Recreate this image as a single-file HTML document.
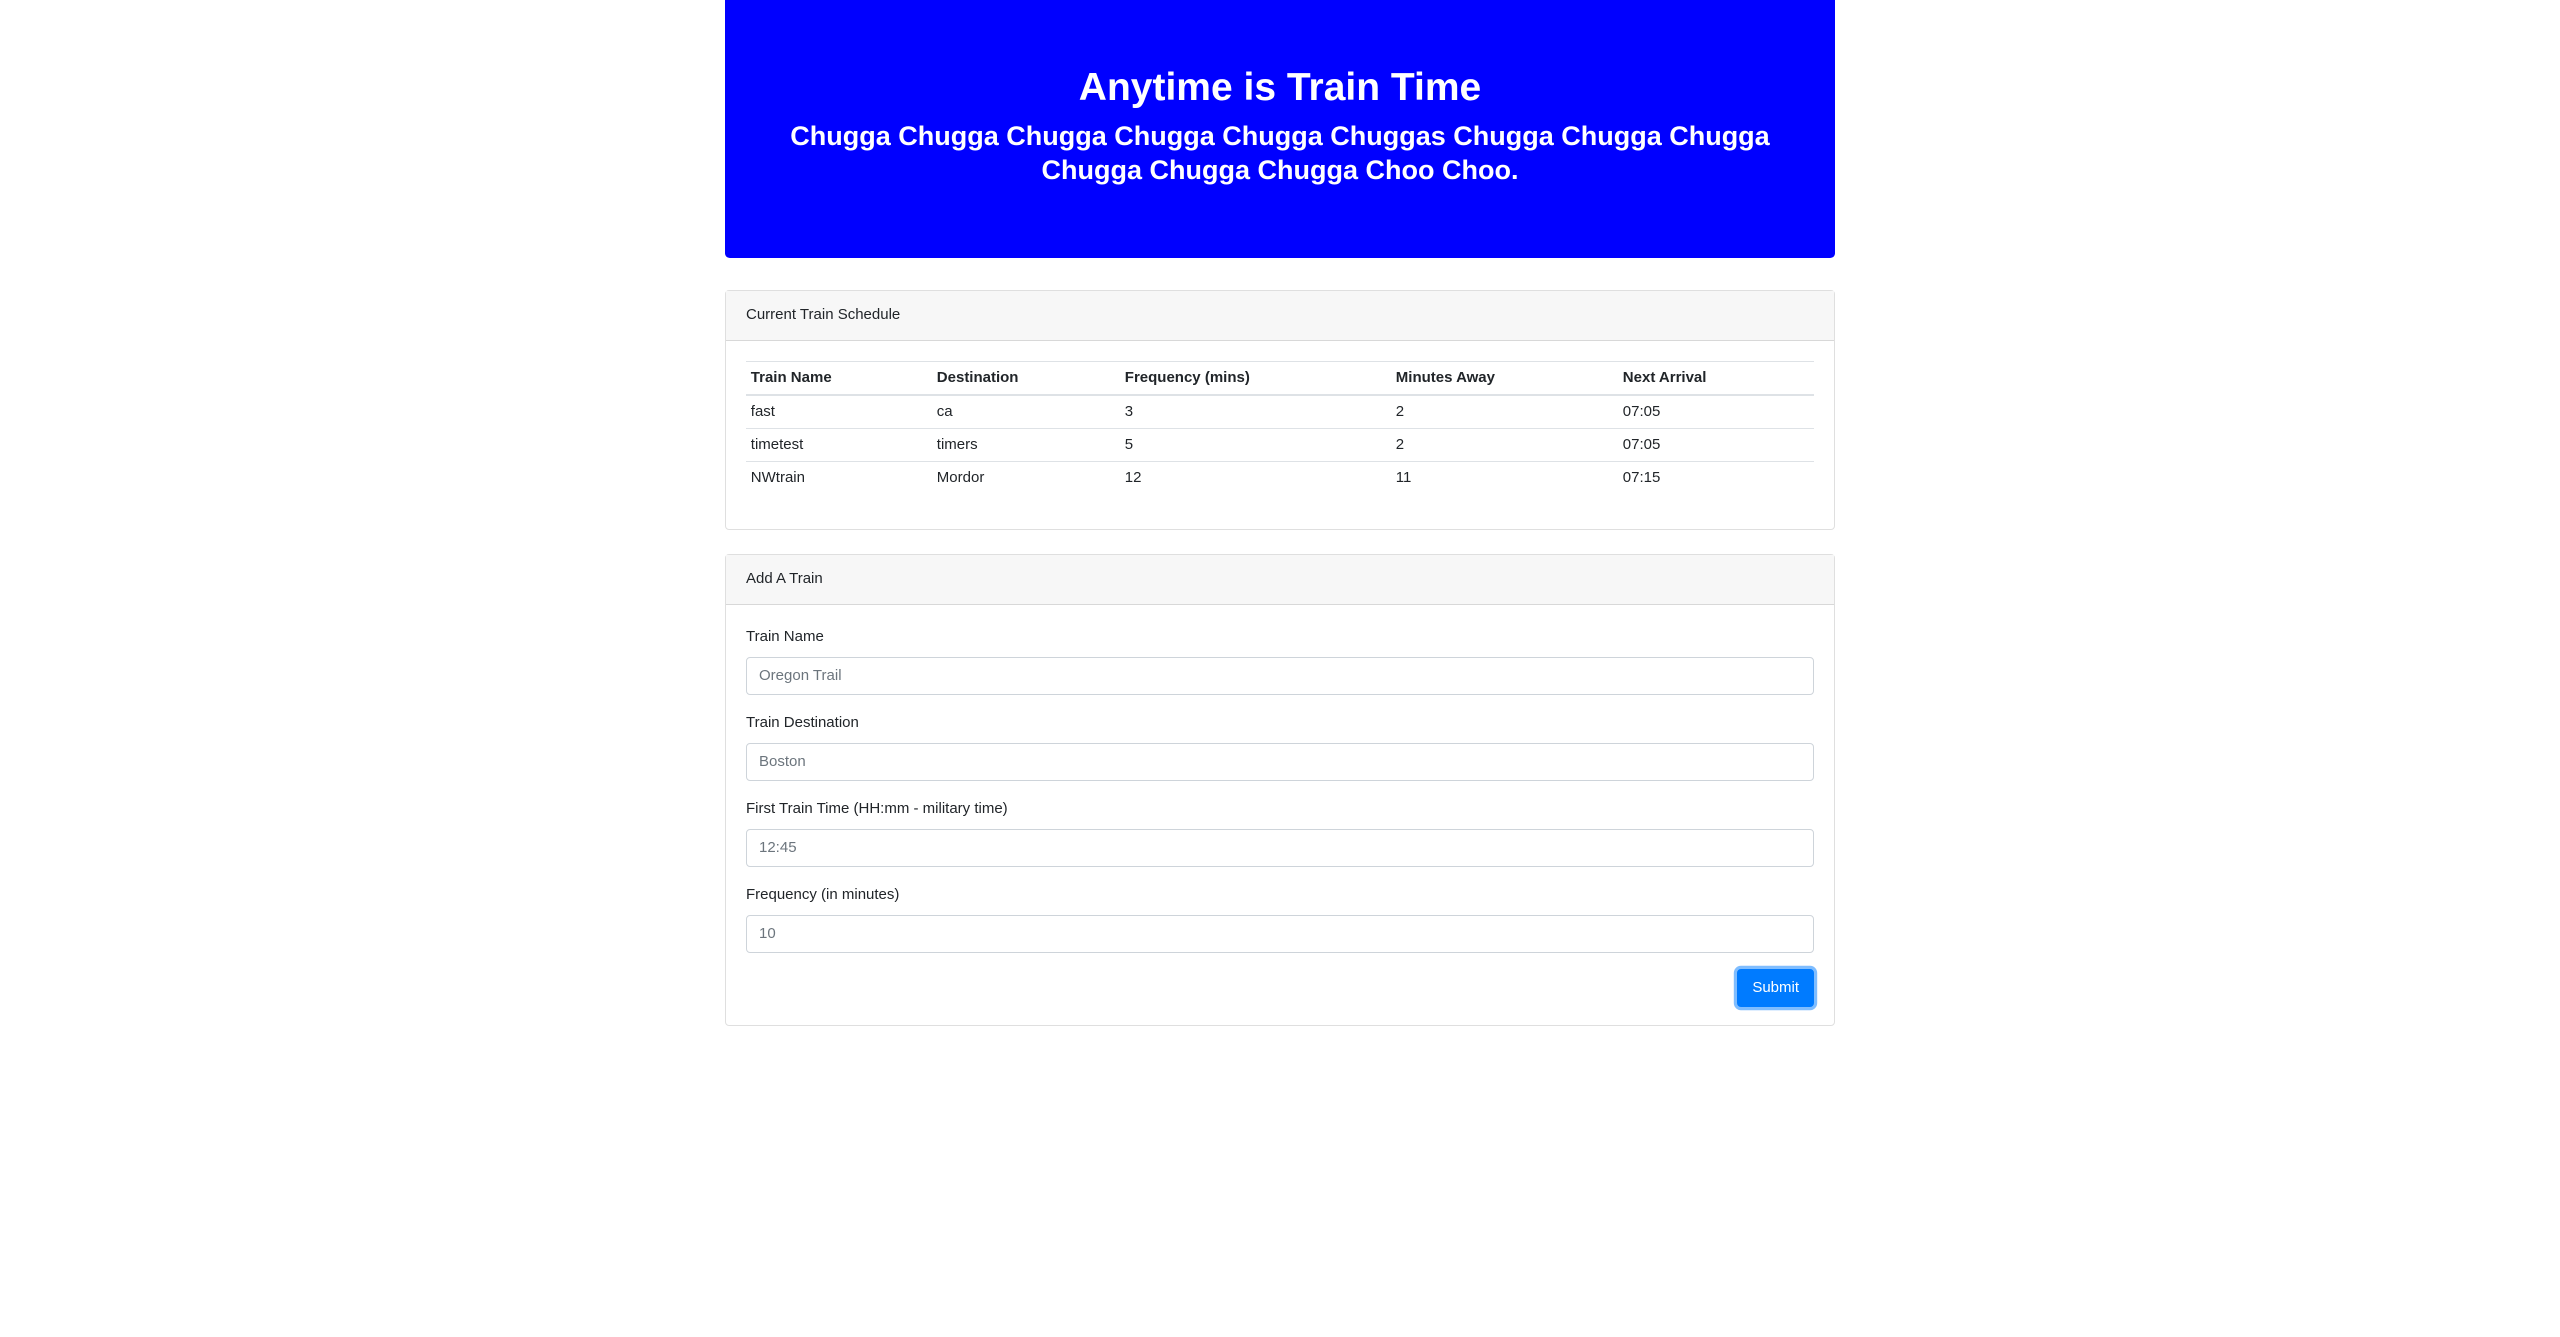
<!DOCTYPE html>
<html><head><meta charset="utf-8"><style>
*{box-sizing:border-box}
body{margin:0;font-family:"Liberation Sans",sans-serif;font-size:15px;line-height:24px;color:#212529;background:#fff}
.container{width:1110px;margin:0 auto}
.jumbo{background:#00f;color:#fff;text-align:center;padding:64px 32px 0;height:258px;border-radius:0 0 4.8px 4.8px;margin-bottom:32px}
.jumbo h1{font-size:39px;line-height:48px;margin:0 0 8px;font-weight:bold}
.jumbo h3{font-size:27px;line-height:33.6px;margin:0;font-weight:bold;padding:0 30px}
.card{border:1px solid rgba(0,0,0,.125);border-radius:4px}
.card-header{background:#f7f7f7;border-bottom:1px solid rgba(0,0,0,.125);padding:12px 20px;height:50px}
.card-body{padding:20px}
table{border-collapse:collapse;width:100%;margin-bottom:15px}
th,td{padding:4.8px;line-height:22.4px;text-align:left;border-top:1px solid #dee2e6}
th{border-bottom:2px solid #dee2e6;font-weight:bold}
label{display:block;margin-bottom:8px}
.fg{margin-bottom:16px}
.inp{height:38px;border:1px solid #ced4da;border-radius:4px;padding:6px 12px;color:#6c757d}
.btnrow{text-align:right;height:38px}
.btn{display:inline-block;background:#007bff;color:#fff;border:1px solid #007bff;border-radius:4px;padding:6px 14px;height:38px;box-shadow:0 0 0 3.2px rgba(0,123,255,.5)}
</style></head><body>
<div class="container">
<div class="jumbo"><h1>Anytime is Train Time</h1><h3>Chugga Chugga Chugga Chugga Chugga Chuggas Chugga Chugga Chugga Chugga Chugga Chugga Choo Choo.</h3></div>
<div class="card">
<div class="card-header">Current Train Schedule</div>
<div class="card-body">
<table>
<tr><th style="width:186px">Train Name</th><th style="width:188px">Destination</th><th style="width:271px">Frequency (mins)</th><th style="width:227px">Minutes Away</th><th>Next Arrival</th></tr>
<tr><td>fast</td><td>ca</td><td>3</td><td>2</td><td>07:05</td></tr>
<tr><td>timetest</td><td>timers</td><td>5</td><td>2</td><td>07:05</td></tr>
<tr><td>NWtrain</td><td>Mordor</td><td>12</td><td>11</td><td>07:15</td></tr>
</table>
</div></div>
<div class="card" style="margin-top:24px">
<div class="card-header">Add A Train</div>
<div class="card-body" style="padding-bottom:18px">
<div class="fg"><label>Train Name</label><div class="inp">Oregon Trail</div></div>
<div class="fg"><label>Train Destination</label><div class="inp">Boston</div></div>
<div class="fg"><label>First Train Time (HH:mm - military time)</label><div class="inp">12:45</div></div>
<div class="fg"><label>Frequency (in minutes)</label><div class="inp">10</div></div>
<div class="btnrow"><span class="btn">Submit</span></div>
</div></div>
</div>
</body></html>
